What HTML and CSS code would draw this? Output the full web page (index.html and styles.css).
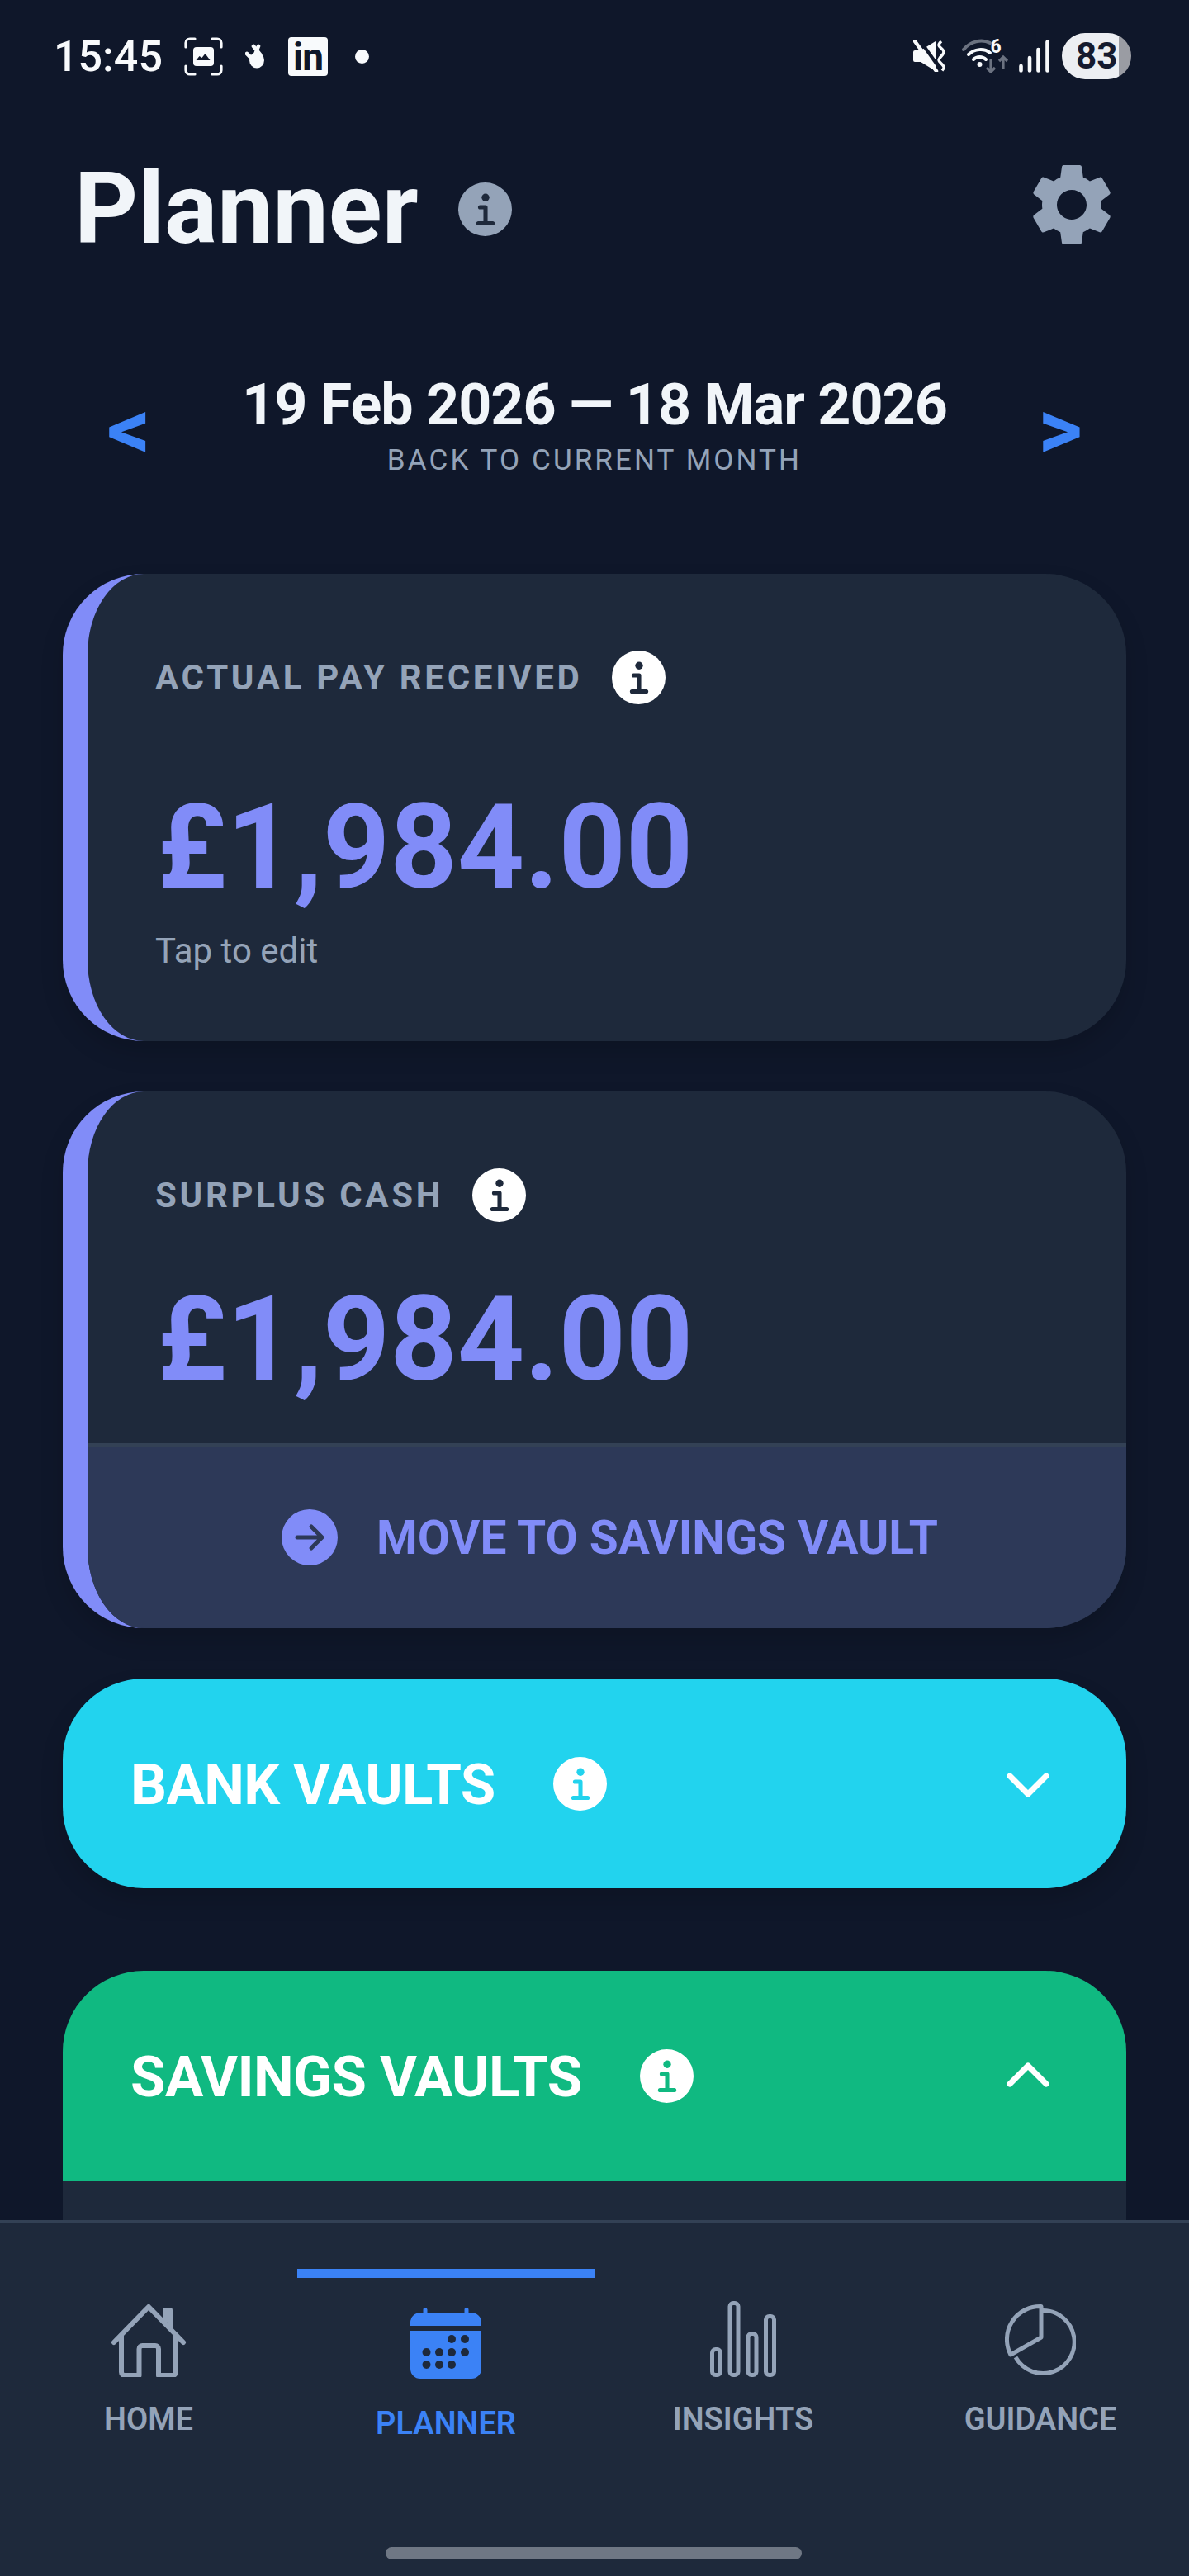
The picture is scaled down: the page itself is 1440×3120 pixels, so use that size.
FILE: index.html
```html
<!doctype html>
<html lang="en">
    <head>
        <meta charset="UTF-8" />
        <meta name="viewport" content="width=device-width, initial-scale=1.0" />
        <title>Planner</title>
        <link rel="stylesheet" href="styles.css">
    </head>
    <body>
        <svg class="sprites" width="0" height="0">
            <symbol id="info" viewBox="0 0 64 64">
                <circle cx="32" cy="32" r="32" fill="currentColor"></circle>
                <circle cx="32.5" cy="18" r="4.6" fill="var(--glyph)"></circle>
                <path d="M26 29.5h6.5v19M24 48.7h17" fill="none" stroke="var(--glyph)" stroke-width="5" stroke-linecap="round" stroke-linejoin="round"></path>
            </symbol>
        </svg>

        <div class="app">
            <header class="status-bar">
                <div class="status-left">
                    <span class="clock">15:45</span>
                    <svg class="ico-shot" width="47" height="47" viewBox="0 0 47 47">
                        <path d="M2 12V7a5 5 0 0 1 5-5h6M34 2h6a5 5 0 0 1 5 5v5M45 35v5a5 5 0 0 1-5 5h-6M13 45H7a5 5 0 0 1-5-5v-5" fill="none" stroke="#f8fafc" stroke-width="3.2" stroke-linecap="round"></path>
                        <rect x="11" y="12" width="25" height="23" rx="4" fill="#f8fafc"></rect>
                        <path d="M14.500 28l4-5 3 2 4-5 6 8z" fill="#0f172a"></path>
                    </svg>
                    <svg class="ico-hand" width="25" height="30" viewBox="0 0 25 30">
                        <ellipse cx="14" cy="20" rx="9" ry="9.500" fill="#f8fafc"></ellipse>
                        <path d="M12 13L16 3M18 13L10 3M7 17L2 12" fill="none" stroke="#f8fafc" stroke-width="4.600" stroke-linecap="round"></path>
                    </svg>
                    <span class="ico-linkedin">in</span>
                    <span class="status-dot"></span>
                </div>
                <div class="status-right">
                    <svg class="ico-mute" width="39" height="38" viewBox="0 0 39 38">
                        <path d="M2 12h7L27 1v36L9 26H2a2 2 0 0 1-2-2V14a2 2 0 0 1 2-2z" fill="#f8fafc"></path>
                        <path d="M6 -3L33 35" stroke="#0f172a" stroke-width="4"></path>
                        <path d="M2 1L28 37" stroke="#f8fafc" stroke-width="4.500" stroke-linecap="round"></path>
                        <path d="M34 1c-4 4-4 5 0 8.500s4 5 0 9.500 -4 5 0 9 4 5 1 8.500" fill="none" stroke="#f8fafc" stroke-width="3.400"></path>
                    </svg>
                    <svg class="ico-wifi" width="57" height="48" viewBox="0 -6 57 48">
                        <path d="M2 13C10 3 24 0 34 5" fill="none" stroke="#6b7280" stroke-width="4" stroke-linecap="round"></path>
                        <path d="M8 19C15 12 27 11 34 17M14 25C18 21 25 21 29 25" fill="none" stroke="#f8fafc" stroke-width="4" stroke-linecap="round"></path>
                        <circle cx="21.500" cy="31" r="3" fill="#f8fafc"></circle>
                        <text class="wifi-six" x="34.500" y="17">6</text>
                        <path d="M35 24v16M30 35l5 5 5-5M50 37V22M45 27l5-5 5 5" fill="none" stroke="#6b7280" stroke-width="3.200"></path>
                    </svg>
                    <svg class="ico-signal" width="37" height="39" viewBox="0 0 37 39">
                        <path d="M2.500 31v5.500M13 21v15.500M23.500 11v25.500M34.500 2v34.500" fill="none" stroke="#f8fafc" stroke-width="4.600" stroke-linecap="round"></path>
                    </svg>
                    <div class="battery"><span class="battery-level">83</span></div>
                </div>
            </header>

            <div class="page-head">
                <div class="page-title">
                    <h1>Planner</h1>
                    <svg class="info-ico muted"><use href="#info"></use></svg>
                </div>
                <svg class="gear" width="120" height="120" viewBox="0 0 24 24">
                    <path fill="#94a3b8" d="M19.140 12.940c.04-.3.06-.61.06-.94 0-.32-.02-.64-.07-.94l2.030-1.580c.18-.14.23-.41.12-.61l-1.920-3.320c-.12-.22-.37-.29-.59-.22l-2.390.96c-.5-.38-1.030-.7-1.620-.94l-.36-2.540c-.04-.24-.24-.41-.48-.41h-3.840c-.24 0-.43.17-.47.41l-.36 2.540c-.59.24-1.130.57-1.620.94l-2.390-.96c-.22-.08-.47 0-.59.22L2.740 8.870c-.12.21-.08.47.12.61l2.030 1.580c-.05.3-.09.63-.09.94s.02.64.07.94l-2.030 1.580c-.18.14-.23.41-.12.61l1.920 3.320c.12.22.37.29.59.22l2.390-.96c.5.38 1.030.7 1.620.94l.36 2.540c.05.24.24.41.48.41h3.840c.24 0 .44-.17.47-.41l.36-2.540c.59-.24 1.130-.56 1.620-.94l2.390.96c.22.08.47 0 .59-.22l1.920-3.320c.12-.22.07-.47-.12-.61l-2.010-1.580zM12 15.600c-1.980 0-3.600-1.620-3.600-3.600s1.620-3.600 3.600-3.600 3.600 1.620 3.600 3.600-1.620 3.600-3.600 3.600z"></path>
                </svg>
            </div>

            <div class="date-nav">
                <span class="date-arrow">&lt;</span>
                <div class="date-range">
                    <div class="date-text">19 Feb 2026 — 18 Mar 2026</div>
                    <div class="date-back">BACK TO CURRENT MONTH</div>
                </div>
                <span class="date-arrow">&gt;</span>
            </div>

            <main class="content">
                <section class="card card-pay">
                    <div class="card-label">
                        <span>ACTUAL PAY RECEIVED</span>
                        <svg class="info-ico on-card"><use href="#info"></use></svg>
                    </div>
                    <div class="amount amount-pay">£1,984.00</div>
                    <div class="tap-hint">Tap to edit</div>
                </section>

                <section class="card card-surplus">
                    <div class="card-body">
                        <div class="card-label">
                            <span>SURPLUS CASH</span>
                            <svg class="info-ico on-card"><use href="#info"></use></svg>
                        </div>
                        <div class="amount amount-surplus">£1,984.00</div>
                    </div>
                    <div class="card-action">
                        <svg class="action-ico" width="68" height="68" viewBox="0 0 68 68">
                            <circle cx="34" cy="34" r="34" fill="#818cf8"></circle>
                            <path d="M19 34h29M36 21l13 13-13 13" fill="none" stroke="#2d3958" stroke-width="5" stroke-linecap="round" stroke-linejoin="round"></path>
                        </svg>
                        <span>MOVE TO SAVINGS VAULT</span>
                    </div>
                </section>

                <section class="vault vault-bank">
                    <div class="vault-head">
                        <span class="vault-name">BANK VAULTS</span>
                        <svg class="info-ico on-bank"><use href="#info"></use></svg>
                        <svg class="vault-chevron" width="58" height="36" viewBox="0 0 58 36">
                            <path d="M7 9l22 22L51 9" fill="none" stroke="#fff" stroke-width="7" stroke-linecap="round" stroke-linejoin="round"></path>
                        </svg>
                    </div>
                </section>

                <section class="vault vault-savings">
                    <div class="vault-head">
                        <span class="vault-name">SAVINGS VAULTS</span>
                        <svg class="info-ico on-savings"><use href="#info"></use></svg>
                        <svg class="vault-chevron" width="58" height="36" viewBox="0 0 58 36">
                            <path d="M7 28L29 6l22 22" fill="none" stroke="#fff" stroke-width="7" stroke-linecap="round" stroke-linejoin="round"></path>
                        </svg>
                    </div>
                    <div class="vault-body"></div>
                </section>
            </main>

            <nav class="tabs">
                <div class="tab">
                    <svg class="tab-ico" width="100" height="92" viewBox="0 0 100 92">
                        <g transform="translate(0 3)" fill="none" stroke="#94a3b8" stroke-width="6" stroke-linecap="round" stroke-linejoin="round">
                            <path d="M8 47L50 4l42 43"></path>
                            <path d="M17 39v44a4 4 0 0 0 4 4h17.500V55a4 4 0 0 1 4-4H58a4 4 0 0 1 4 4v32h17a4 4 0 0 0 4-4V39"></path>
                            <path d="M70 22V8h6v22"></path>
                        </g>
                    </svg>
                    <span class="tab-name">HOME</span>
                </div>
                <div class="tab tab-active">
                    <svg class="tab-ico" width="86" height="92" viewBox="0 -3 86 92">
                        <path fill="#3b82f6" d="M12 6H15.500V2.500a2.500 2.500 0 0 1 5 0V6H65.500V2.500a2.500 2.500 0 0 1 5 0V6H74a12 12 0 0 1 12 12v4H0v-4A12 12 0 0 1 12 6zM0 28h86v46a12 12 0 0 1-12 12H12A12 12 0 0 1 0 74z"></path>
                        <g fill="#1e293b">
                            <circle cx="50" cy="38" r="5"></circle><circle cx="66" cy="38" r="5"></circle>
                            <circle cx="19.500" cy="54" r="5"></circle><circle cx="35" cy="54" r="5"></circle><circle cx="50" cy="54" r="5"></circle><circle cx="66" cy="54" r="5"></circle>
                            <circle cx="19.500" cy="69" r="5"></circle><circle cx="35" cy="69" r="5"></circle><circle cx="50" cy="69" r="5"></circle>
                        </g>
                    </svg>
                    <span class="tab-name">PLANNER</span>
                </div>
                <div class="tab">
                    <svg class="tab-ico" width="80" height="92" viewBox="0 0 80 92">
                        <g fill="none" stroke="#94a3b8" stroke-width="5">
                            <rect x="2.500" y="58.500" width="10" height="31" rx="4"></rect>
                            <rect x="24" y="2.500" width="10" height="87" rx="4"></rect>
                            <rect x="46" y="39.500" width="10" height="50" rx="4"></rect>
                            <rect x="67.500" y="18.500" width="10" height="71" rx="4"></rect>
                        </g>
                    </svg>
                    <span class="tab-name">INSIGHTS</span>
                </div>
                <div class="tab">
                    <svg class="tab-ico" width="86" height="92" viewBox="0 -3 86 92">
                        <g fill="none" stroke="#94a3b8" stroke-width="5" stroke-linejoin="round">
                            <path d="M46 8.500A38 38 0 1 1 13 65"></path>
                            <path d="M44 3.500A40 40 0 0 0 7 62L44 41z"></path>
                        </g>
                    </svg>
                    <span class="tab-name">GUIDANCE</span>
                </div>
                <div class="home-handle"></div>
            </nav>
        </div>
    </body>
</html>
```

FILE: styles.css
```css
* {
    box-sizing: border-box;
}

html,
body {
    margin: 0;
    padding: 0;
    background: #0f172a;
}

body {
    font-family: Roboto, "Liberation Sans", sans-serif;
    color: #f1f5f9;
}

.sprites {
    display: block;
    position: absolute;
}

.app {
    width: 1440px;
    height: 3120px;
    display: flex;
    flex-direction: column;
    overflow: hidden;
}

/* status bar */

.status-bar {
    height: 136px;
    flex: none;
    display: flex;
    align-items: center;
    justify-content: space-between;
    padding: 0 70px 0 65px;
}

.status-left,
.status-right {
    display: flex;
    align-items: center;
}

.clock {
    font-size: 52px;
    font-weight: 500;
    color: #f8fafc;
}

.ico-shot {
    margin-left: 26px;
}

.ico-hand {
    margin-left: 27px;
}

.ico-linkedin {
    width: 48px;
    height: 47px;
    margin-left: 27px;
    background: #f8fafc;
    border-radius: 4px;
    color: #0f172a;
    font-size: 46px;
    font-weight: 700;
    line-height: 48px;
    letter-spacing: -1px;
    text-align: center;
}

.status-dot {
    width: 17px;
    height: 17px;
    margin-left: 33px;
    border-radius: 50%;
    background: #f8fafc;
}

.ico-wifi {
    margin-left: 20px;
    margin-top: -6px;
}

.wifi-six {
    font-size: 23px;
    font-weight: 700;
    fill: #f8fafc;
}

.ico-signal {
    margin-left: 12px;
}

.battery {
    width: 84px;
    height: 56px;
    margin-left: 15px;
    border-radius: 28px;
    background: linear-gradient(90deg, #eceef2 0, #eceef2 69px, #9a9ca3 69px);
    color: #151a2e;
    font-size: 44px;
    font-weight: 700;
    line-height: 57px;
    padding-left: 17px;
}

/* heading */

.page-head {
    height: 234px;
    flex: none;
    display: flex;
    align-items: center;
    justify-content: space-between;
    padding: 0 82px 0 90px;
}

.page-title {
    display: flex;
    align-items: center;
}

.page-title h1 {
    margin: 0;
    font-size: 120px;
    font-weight: 700;
    line-height: 140px;
}

.info-ico {
    width: 65px;
    height: 65px;
    flex: none;
}

.info-ico.muted {
    margin-left: 48px;
    color: #94a3b8;
    --glyph: #1e293b;
}

.info-ico.on-card {
    color: #fff;
    --glyph: #1e293b;
}

.info-ico.on-bank {
    color: #fff;
    --glyph: #22d3ee;
}

.info-ico.on-savings {
    color: #fff;
    --glyph: #10b981;
}

.gear {
    margin-top: -10px;
}

/* date switcher */

.date-nav {
    flex: none;
    display: flex;
    align-items: center;
    margin-top: 78px;
    padding: 0 127px;
}

.date-arrow {
    width: 58px;
    padding-top: 12px;
    color: #3b82f6;
    font-size: 104px;
    font-weight: 700;
    line-height: 116px;
    text-align: center;
}

.date-range {
    flex: 1;
    text-align: center;
}

.date-text {
    font-size: 70px;
    font-weight: 700;
    line-height: 84px;
    letter-spacing: -1px;
}

.date-back {
    margin-top: 4px;
    color: #94a3b8;
    font-size: 35px;
    line-height: 44px;
    letter-spacing: 3.100px;
}

/* cards */

.content {
    flex: 1;
    min-height: 0;
    overflow: hidden;
    padding: 115px 76px 0;
    display: flex;
    flex-direction: column;
}

.card {
    flex: none;
    background: #1e293b;
    border-left: 30px solid #818cf8;
    border-radius: 98px;
    box-shadow: 0 14px 28px rgba(0, 0, 0, 0.15);
    overflow: hidden;
}

.card-pay {
    padding: 84px 82px 81px;
}

.card-surplus {
    margin-top: 61px;
}

.card-body {
    padding: 84px 82px 41px;
}

.card-label {
    height: 82px;
    display: flex;
    align-items: center;
    gap: 35px;
    color: #94a3b8;
    font-size: 42px;
    font-weight: 700;
    letter-spacing: 3.700px;
}

.amount {
    margin-left: 2px;
    color: #818cf8;
    font-size: 142px;
    font-weight: 700;
    line-height: 168px;
}

.amount-pay {
    margin-top: 82px;
}

.amount-surplus {
    margin-top: 51px;
}

.tap-hint {
    margin-top: 13px;
    color: #94a3b8;
    font-size: 42px;
    line-height: 56px;
}

.card-action {
    height: 224px;
    display: flex;
    align-items: center;
    justify-content: center;
    gap: 47px;
    padding-left: 7px;
    background: #2d3958;
    border-top: 4px solid #334155;
    color: #818cf8;
    font-size: 56.800px;
    font-weight: 700;
}

/* vaults */

.vault {
    flex: none;
    border-radius: 98px;
    overflow: hidden;
}

.vault-bank {
    margin-top: 61px;
    background: #22d3ee;
    box-shadow: 0 14px 28px rgba(0, 0, 0, 0.15);
}

.vault-savings {
    margin-top: 100px;
    border-radius: 98px 98px 0 0;
    background: #1e293b;
}

.vault-savings .vault-head {
    background: #10b981;
}

.vault-head {
    height: 254px;
    display: flex;
    align-items: center;
    padding: 0 90px 0 82px;
    gap: 70px;
    color: #fff;
}

.vault-name {
    padding-top: 2px;
    font-size: 69px;
    font-weight: 700;
    letter-spacing: -0.600px;
}

.vault-chevron {
    margin-left: auto;
}

.vault-body {
    height: 120px;
}

/* bottom tabs */

.tabs {
    position: relative;
    height: 431px;
    flex: none;
    display: grid;
    grid-template-columns: repeat(4, 1fr);
    align-items: start;
    padding-top: 55px;
    background: #1e293b;
    border-top: 4px solid #334155;
}

.tab {
    display: flex;
    flex-direction: column;
    align-items: center;
    padding-top: 39px;
    color: #94a3b8;
}

.tab-ico {
    display: block;
}

.tab-name {
    margin-top: 28px;
    font-size: 38px;
    font-weight: 600;
    line-height: 46px;
}

.tab-active {
    padding-top: 33px;
    border-top: 11px solid #3b82f6;
    color: #3b82f6;
}

.home-handle {
    position: absolute;
    left: 467px;
    bottom: 20px;
    width: 504px;
    height: 15px;
    border-radius: 8px;
    background: #6f7784;
}
```
